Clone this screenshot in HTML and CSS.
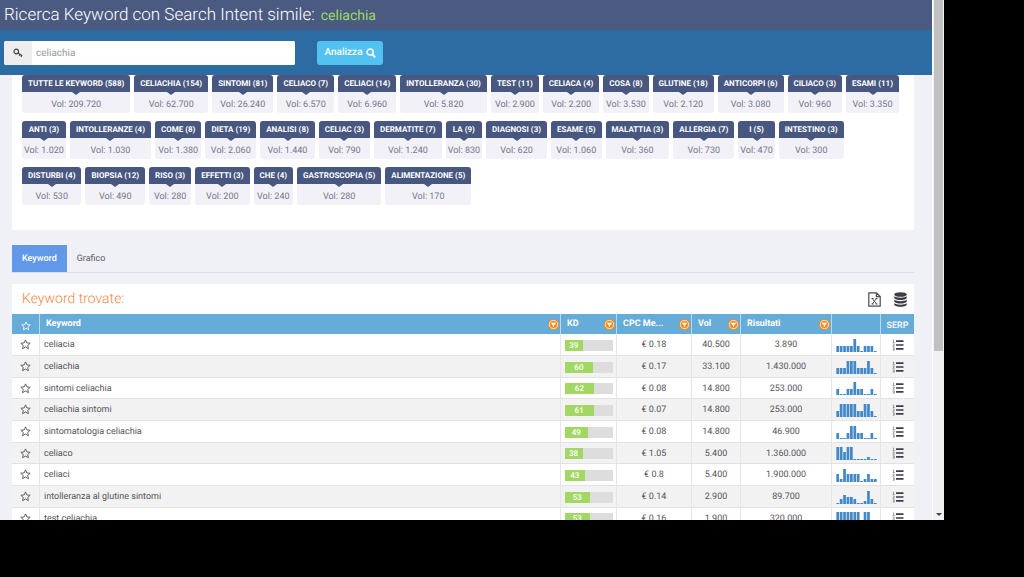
FILE: index.html
```html
<!DOCTYPE html>
<html lang="it">
<head>
<meta charset="utf-8">
<title>Ricerca Keyword con Search Intent simile</title>
<link rel="stylesheet" href="styles.css">
</head>
<body>
<svg class="defs" aria-hidden="true">
  <symbol id="star" viewBox="0 0 24 24"><path d="M12 2l3 6.600 7.200.7-5.400 4.800 1.600 7.100L12 17.500l-6.400 3.700 1.600-7.100L1.800 9.300l7.200-.7z" fill="none" stroke="currentColor" stroke-width="2" stroke-linejoin="round"/></symbol>
  <symbol id="filter" viewBox="0 0 12 12"><circle cx="6" cy="6" r="6" fill="#f28c22"/><circle cx="6" cy="6" r="4.400" fill="none" stroke="#fff" stroke-width=".8"/><path d="M3 4.200h6L6.700 6.800v1.600H5.300V6.800z" fill="#fff"/></symbol>
  <symbol id="list" viewBox="0 0 12 12"><path d="M4 2.200h7.500M4 6h7.500M4 9.800h7.500" stroke="#3c3c4c" stroke-width="1.700"/><path d="M.8 1h.8v2.400M.7 3.500h2M.7 5h1.500v1L.8 7.200h1.900M.7 8.800h1.600v2.400H.7M1 10h1.200" fill="none" stroke="#777784" stroke-width=".7"/></symbol>
</svg>
<div class="screen">
  <div class="page">
    <header class="title-bar"><h1>Ricerca Keyword con Search Intent simile:</h1><span class="term">celiachia</span></header>
    <form class="search-bar">
      <div class="search-field">
        <label for="q" class="key" aria-label="Keyword"><svg width="10" height="10" viewBox="0 0 20 20" fill="none" stroke="#444" stroke-width="2.400"><circle cx="6.500" cy="7" r="4.600"/><path d="M10 10l8.500 5.500M14 12.500l-1.500 3M17.500 15l-1.500 3"/></svg></label>
        <input id="q" type="text" value="celiachia">
      </div>
      <button class="analyze" type="button">Analizza <svg width="10" height="10" viewBox="0 0 20 20" fill="none" stroke="#fff" stroke-width="3"><circle cx="8.200" cy="8.200" r="6"/><path d="M12.800 12.800l5.700 5.700" stroke-width="4"/></svg></button>
    </form>
    <main>
      <section class="panel cloud">
        <div class="chips">
          <div class="chip"><b>TUTTE LE KEYWORD (588)</b><span>Vol: 209.720</span></div>
          <div class="chip"><b>CELIACHIA (154)</b><span>Vol: 62.700</span></div>
          <div class="chip"><b>SINTOMI (81)</b><span>Vol: 26.240</span></div>
          <div class="chip"><b>CELIACO (7)</b><span>Vol: 6.570</span></div>
          <div class="chip"><b>CELIACI (14)</b><span>Vol: 6.960</span></div>
          <div class="chip"><b>INTOLLERANZA (30)</b><span>Vol: 5.820</span></div>
          <div class="chip"><b>TEST (11)</b><span>Vol: 2.900</span></div>
          <div class="chip"><b>CELIACA (4)</b><span>Vol: 2.200</span></div>
          <div class="chip"><b>COSA (8)</b><span>Vol: 3.530</span></div>
          <div class="chip"><b>GLUTINE (18)</b><span>Vol: 2.120</span></div>
          <div class="chip"><b>ANTICORPI (6)</b><span>Vol: 3.080</span></div>
          <div class="chip"><b>CILIACO (3)</b><span>Vol: 960</span></div>
          <div class="chip"><b>ESAMI (11)</b><span>Vol: 3.350</span></div>
        </div>
        <div class="chips">
          <div class="chip"><b>ANTI (3)</b><span>Vol: 1.020</span></div>
          <div class="chip"><b>INTOLLERANZE (4)</b><span>Vol: 1.030</span></div>
          <div class="chip"><b>COME (8)</b><span>Vol: 1.380</span></div>
          <div class="chip"><b>DIETA (19)</b><span>Vol: 2.060</span></div>
          <div class="chip"><b>ANALISI (8)</b><span>Vol: 1.440</span></div>
          <div class="chip"><b>CELIAC (3)</b><span>Vol: 790</span></div>
          <div class="chip"><b>DERMATITE (7)</b><span>Vol: 1.240</span></div>
          <div class="chip"><b>LA (9)</b><span>Vol: 830</span></div>
          <div class="chip"><b>DIAGNOSI (3)</b><span>Vol: 620</span></div>
          <div class="chip"><b>ESAME (5)</b><span>Vol: 1.060</span></div>
          <div class="chip"><b>MALATTIA (3)</b><span>Vol: 360</span></div>
          <div class="chip"><b>ALLERGIA (7)</b><span>Vol: 730</span></div>
          <div class="chip"><b>I (5)</b><span>Vol: 470</span></div>
          <div class="chip"><b>INTESTINO (3)</b><span>Vol: 300</span></div>
        </div>
        <div class="chips">
          <div class="chip"><b>DISTURBI (4)</b><span>Vol: 530</span></div>
          <div class="chip"><b>BIOPSIA (12)</b><span>Vol: 490</span></div>
          <div class="chip"><b>RISO (3)</b><span>Vol: 280</span></div>
          <div class="chip"><b>EFFETTI (3)</b><span>Vol: 200</span></div>
          <div class="chip"><b>CHE (4)</b><span>Vol: 240</span></div>
          <div class="chip"><b>GASTROSCOPIA (5)</b><span>Vol: 280</span></div>
          <div class="chip"><b>ALIMENTAZIONE (5)</b><span>Vol: 170</span></div>
        </div>
      </section>
      <nav class="tabs"><button type="button" class="tab active">Keyword</button><button type="button" class="tab">Grafico</button></nav>
      <section class="panel results">
        <div class="results-head">
          <h2>Keyword trovate:</h2>
          <button type="button" class="icon" aria-label="Esporta Excel"><svg width="13" height="15" viewBox="0 0 13 15" fill="none" stroke="#4a4a52" stroke-width="1.200"><path d="M.8.800h7.600l3.800 3.800v9.600H.8zM8.400.800v3.800h3.800"/><path d="M4.300 6.500l4.200 5.500M8.500 6.500L4.300 12M3.500 6.500h2M7.500 6.500h2M3.500 12h2M7.500 12h2" stroke-width="1"/></svg></button>
          <button type="button" class="icon" aria-label="Database"><svg width="13" height="15" viewBox="0 0 13 15" fill="#3d3d46"><ellipse cx="6.500" cy="2.500" rx="6.200" ry="2.300"/><path d="M.3 4.300c1.800 1.900 10.600 1.900 12.400 0v1.900c-1.200 2.400-11.200 2.400-12.400 0zM.3 7.800c1.800 1.900 10.600 1.900 12.400 0v1.900c-1.200 2.400-11.200 2.400-12.400 0zM.3 11.200c1.800 1.900 10.600 1.900 12.400 0v1.700c-1.200 2.400-11.200 2.400-12.400 0z"/></svg></button>
        </div>
        <table>
          <colgroup><col class="c-star"><col><col class="c-kd"><col class="c-cpc"><col class="c-vol"><col class="c-res"><col class="c-trend"><col class="c-serp"></colgroup>
          <thead><tr>
            <th class="mid"><svg class="star"><use href="#star"/></svg></th>
            <th><div class="th">Keyword<button type="button" aria-label="Filtra Keyword"><svg><use href="#filter"/></svg></button></div></th>
            <th><div class="th">KD<button type="button" aria-label="Filtra KD"><svg><use href="#filter"/></svg></button></div></th>
            <th><div class="th">CPC Me...<button type="button" aria-label="Filtra CPC"><svg><use href="#filter"/></svg></button></div></th>
            <th><div class="th">Vol<button type="button" aria-label="Filtra Vol"><svg><use href="#filter"/></svg></button></div></th>
            <th><div class="th">Risultati<button type="button" aria-label="Filtra Risultati"><svg><use href="#filter"/></svg></button></div></th>
            <th></th>
            <th class="mid">SERP</th>
          </tr></thead>
          <tbody>
            <tr><td><svg class="star"><use href="#star"/></svg></td><td>celiacia</td><td><div class="kd"><span style="width:39%">39</span></div></td><td>€ 0.18</td><td>40.500</td><td>3.890</td><td><svg class="trend" viewBox="0 0 12 14" preserveAspectRatio="none"><path d="M.5 14v-6m1 6v-6m1 6v-6m1 6v-6m1 6v-6m1 6v-13m1 13v-6m1 6v-1m1 1v-6m1 6v-6m1 6v-6m1 6v-1"/></svg></td><td><svg class="list"><use href="#list"/></svg></td></tr>
            <tr><td><svg class="star"><use href="#star"/></svg></td><td>celiachia</td><td><div class="kd"><span style="width:60%">60</span></div></td><td>€ 0.17</td><td>33.100</td><td>1.430.000</td><td><svg class="trend" viewBox="0 0 12 14" preserveAspectRatio="none"><path d="M.5 14v-6m1 6v-6m1 6v-6m1 6v-13m1 13v-13m1 13v-13m1 13v-6m1 6v-6m1 6v-6m1 6v-13m1 13v-6m1 6v-1"/></svg></td><td><svg class="list"><use href="#list"/></svg></td></tr>
            <tr><td><svg class="star"><use href="#star"/></svg></td><td>sintomi celiachia</td><td><div class="kd"><span style="width:62%">62</span></div></td><td>€ 0.08</td><td>14.800</td><td>253.000</td><td><svg class="trend" viewBox="0 0 12 14" preserveAspectRatio="none"><path d="M.5 14v-6m1 6v-1m1 1v-1m1 1v-6m1 6v-6m1 6v-13m1 13v-6m1 6v-6m1 6v-1m1 1v-1m1 1v-6m1 6v-1"/></svg></td><td><svg class="list"><use href="#list"/></svg></td></tr>
            <tr><td><svg class="star"><use href="#star"/></svg></td><td>celiachia sintomi</td><td><div class="kd"><span style="width:61%">61</span></div></td><td>€ 0.07</td><td>14.800</td><td>253.000</td><td><svg class="trend" viewBox="0 0 12 14" preserveAspectRatio="none"><path d="M.5 14v-6m1 6v-13m1 13v-13m1 13v-13m1 13v-13m1 13v-13m1 13v-6m1 6v-6m1 6v-13m1 13v-13m1 13v-6m1 6v-1"/></svg></td><td><svg class="list"><use href="#list"/></svg></td></tr>
            <tr><td><svg class="star"><use href="#star"/></svg></td><td>sintomatologia celiachia</td><td><div class="kd"><span style="width:49%">49</span></div></td><td>€ 0.08</td><td>14.800</td><td>46.900</td><td><svg class="trend" viewBox="0 0 12 14" preserveAspectRatio="none"><path d="M.5 14v-6m1 6v-1m1 1v-1m1 1v-6m1 6v-13m1 13v-13m1 13v-6m1 6v-6m1 6v-1m1 1v-1m1 1v-6m1 6v-1"/></svg></td><td><svg class="list"><use href="#list"/></svg></td></tr>
            <tr><td><svg class="star"><use href="#star"/></svg></td><td>celiaco</td><td><div class="kd"><span style="width:38%">38</span></div></td><td>€ 1.05</td><td>5.400</td><td>1.360.000</td><td><svg class="trend" viewBox="0 0 12 14" preserveAspectRatio="none"><path d="M.5 14v-13m1 13v-13m1 13v-8m1 8v-13m1 13v-13m1 13v-1m1 1v-1m1 1v-1m1 1v-1m1 1v-3m1 3v-1m1 1v-1"/></svg></td><td><svg class="list"><use href="#list"/></svg></td></tr>
            <tr><td><svg class="star"><use href="#star"/></svg></td><td>celiaci</td><td><div class="kd"><span style="width:43%">43</span></div></td><td>€ 0.8</td><td>5.400</td><td>1.900.000</td><td><svg class="trend" viewBox="0 0 12 14" preserveAspectRatio="none"><path d="M.5 14v-8m1 8v-3m1 3v-13m1 13v-8m1 8v-8m1 8v-8m1 8v-8m1 8v-1m1 1v-3m1 3v-8m1 8v-3m1 3v-3"/></svg></td><td><svg class="list"><use href="#list"/></svg></td></tr>
            <tr><td><svg class="star"><use href="#star"/></svg></td><td>intolleranza al glutine sintomi</td><td><div class="kd"><span style="width:53%">53</span></div></td><td>€ 0.14</td><td>2.900</td><td>89.700</td><td><svg class="trend" viewBox="0 0 12 14" preserveAspectRatio="none"><path d="M.5 14v-1m1 1v-5m1 5v-9m1 9v-7m1 7v-7m1 7v-5m1 5v-1m1 1v-1m1 1v-3m1 3v-13m1 13v-5m1 5v-1"/></svg></td><td><svg class="list"><use href="#list"/></svg></td></tr>
            <tr><td><svg class="star"><use href="#star"/></svg></td><td>test celiachia</td><td><div class="kd"><span style="width:53%">53</span></div></td><td>€ 0.16</td><td>1.900</td><td>320.000</td><td><svg class="trend" viewBox="0 0 12 14" preserveAspectRatio="none"><path d="M.5 14v-13m1 13v-13m1 13v-13m1 13v-13m1 13v-13m1 13v-13m1 13v-13m1 13v-1m1 1v-13m1 13v-13m1 13v-1m1 1v-1"/></svg></td><td><svg class="list"><use href="#list"/></svg></td></tr>
          </tbody>
        </table>
      </section>
    </main>
  </div>
  <div class="scrollbar"><div class="thumb"></div><svg class="down" width="6" height="3" viewBox="0 0 6 3"><path d="M0 0h6L3 3z" fill="#444"/></svg></div>
</div>
</body>
</html>
```
FILE: styles.css
```css
* { box-sizing: border-box; }

body {
  margin: 0;
  padding: 0 80px 57px 0;
  background: #000;
  color: #55555c;
  font-family: Roboto, "Liberation Sans", sans-serif;
  font-size: 9px;
  text-rendering: geometricPrecision;
  overflow: hidden;
}

button, input { font: inherit; text-rendering: inherit; border: 0; margin: 0; }
button { background: none; padding: 0; }
svg { display: block; }
.defs { position: absolute; width: 0; height: 0; }

.screen {
  display: flex;
  height: calc(100vh - 57px);
  overflow: hidden;
  background: #f0f1f7;
}
.page { flex: 1; min-width: 0; overflow: hidden; }

.title-bar {
  display: flex;
  align-items: center;
  gap: 6px;
  height: 30px;
  padding: 0 4px;
  background: #4b5a80;
}
.title-bar h1 { margin: 0; font-size: 17px; font-weight: 300; color: #fff; white-space: nowrap; }
.term { font-size: 14px; color: #9bdb66; padding-top: 2px; }

.search-bar {
  display: flex;
  align-items: center;
  gap: 22px;
  height: 45px;
  padding: 0 4px;
  background: #2d6ca3;
}
.search-field { display: flex; width: 291px; height: 24px; background: #fff; border-radius: 2px; overflow: hidden; }
.key { display: flex; align-items: center; justify-content: center; width: 28px; background: #eee; }
.search-field input { flex: 1; min-width: 0; padding: 2px 4px 0; font-size: 10px; color: #999; background: #fff; }
.analyze {
  display: flex;
  align-items: center;
  justify-content: center;
  gap: 3px;
  width: 66px;
  height: 24px;
  border-radius: 3px;
  background: #54c2f0;
  color: #fff;
  font-size: 10px;
  font-weight: 500;
}

main { padding: 0 18px 0 12px; }
.panel { background: #fff; }

.cloud { display: flex; flex-direction: column; gap: 8px; padding: 0 10px 25px; }
.chips { display: flex; gap: 4px; }
.chip {
  height: 38px;
  border-radius: 3px;
  overflow: hidden;
  background: #f1f1f7;
  text-align: center;
  white-space: nowrap;
}
.chip b {
  display: block;
  position: relative;
  height: 17px;
  padding: 0 6px;
  line-height: 17px;
  font-size: 8px;
  font-weight: 700;
  color: #fff;
  background: #475780;
}
.chip b::after {
  content: "";
  position: absolute;
  left: calc(50% - 4px);
  top: 100%;
  border: 4px solid transparent;
  border-top: 3px solid #475780;
  border-bottom: 0;
}
.chip span { display: block; padding: 0 2px; line-height: 26px; color: #74778a; }

.tabs { display: flex; margin-top: 15px; border-bottom: 1px solid #dedfe5; }
.tab { height: 27px; padding: 0 10px; color: #606066; }
.tab.active { background: #6199e8; color: #fff; font-weight: 500; }

.results { margin-top: 11px; }
.results-head { display: flex; align-items: center; gap: 13px; height: 30px; padding: 0 7px 0 10px; }
.results-head h2 { flex: 1; margin: 0; font-size: 14px; font-weight: 300; color: #ee8a45; }

table { width: 100%; border-collapse: separate; border-spacing: 0; table-layout: fixed; }
.c-star { width: 28px; }
.c-kd { width: 56px; }
.c-cpc { width: 75px; }
.c-vol { width: 49px; }
.c-res { width: 91px; }
.c-trend { width: 49px; }
.c-serp { width: 33px; }

th { height: 20px; padding: 0; background: #66acd8; color: #fff; font-weight: 700; text-align: left; border-right: 1px solid #b9dbf0; }
th:last-child, td:last-child { border-right: 0; }
.mid { text-align: center; vertical-align: bottom; padding-bottom: 3px; font-weight: 500; }
.th { display: flex; align-items: center; justify-content: space-between; padding: 0 1px 0 6px; }
.th svg { width: 11px; height: 11px; }

td { height: 22px; padding: 1px 0 0; text-align: center; border-right: 1px solid #e6e6e6; border-bottom: 1px solid #e2e2e2; white-space: nowrap; }
tr:nth-child(3n) td { height: 21px; }
tbody tr:nth-child(even) td { background: #f2f2f2; }
td:nth-child(2) { text-align: left; padding-left: 4px; }
td:first-child, td:nth-child(n+7) { padding-top: 0; }
.star { width: 11px; height: 11px; margin: 0 auto; color: #55555c; }
th .star { width: 10px; height: 10px; color: #fff; }
.list { width: 12px; height: 12px; margin: 0 auto; }
.kd { width: 48px; height: 11px; margin: 0 auto; background: #ddd; }
.kd span { display: block; height: 11px; line-height: 11px; background: #a3d764; color: #fff; font-size: 8px; font-weight: 500; }
.trend { width: 41px; height: 14px; margin: 0 auto; }
.trend path { fill: none; stroke: #4389c8; stroke-width: .8; }

.scrollbar {
  display: flex;
  flex-direction: column;
  justify-content: space-between;
  align-items: center;
  width: 12px;
  padding-bottom: 4px;
  background: #f1f1f4;
  border-left: 1px solid #fff;
}
.thumb { width: 9px; height: 68%; background: #c1c1c1; }
```
